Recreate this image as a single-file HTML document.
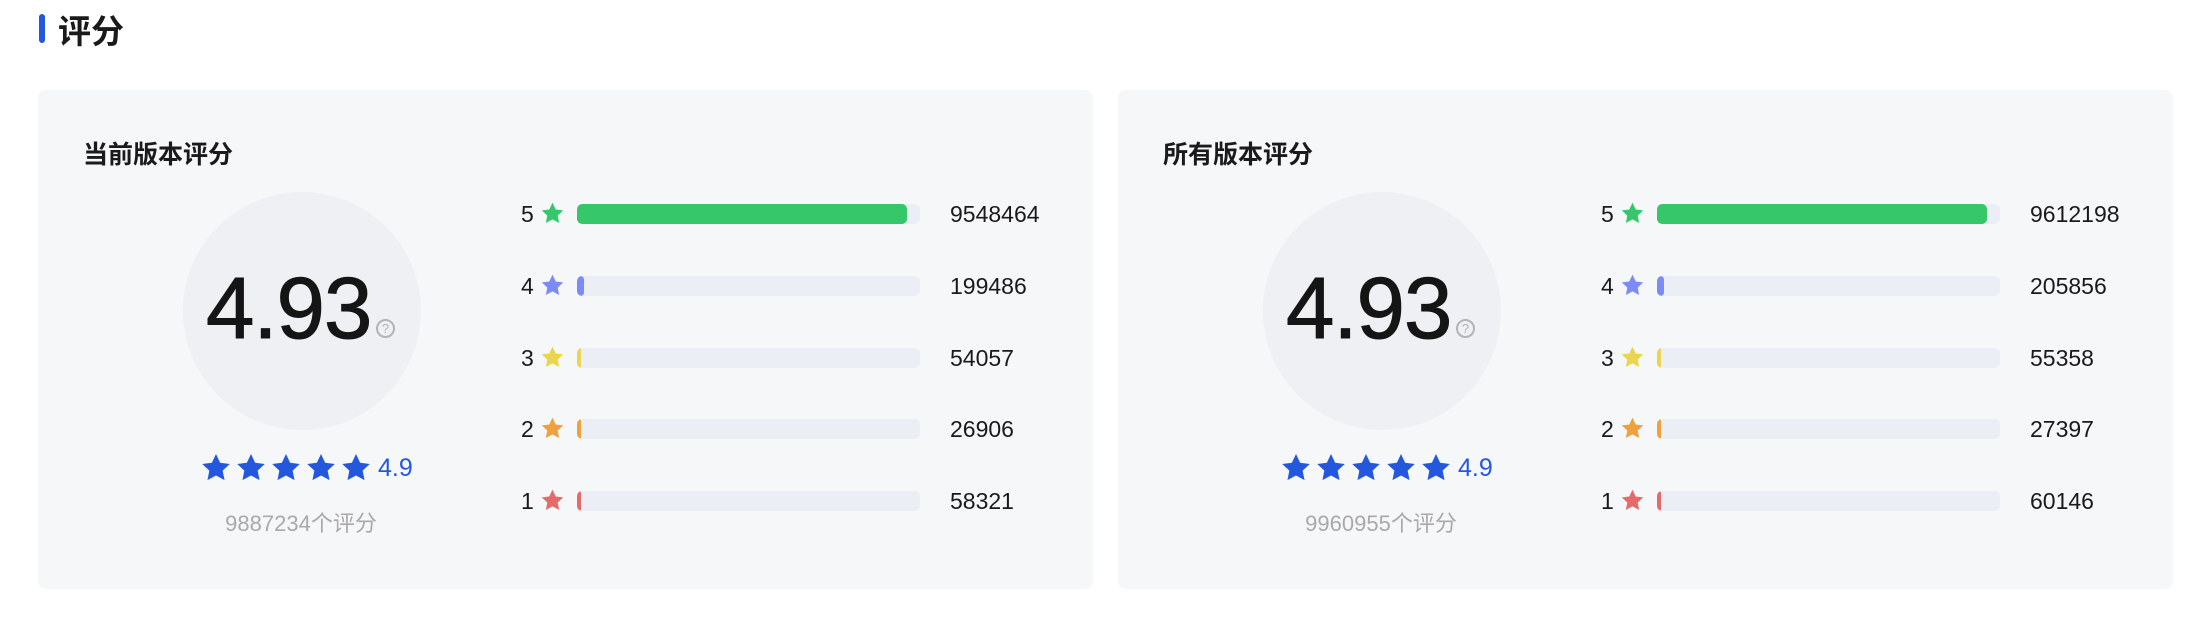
<!DOCTYPE html><html><head><meta charset="utf-8"><style>
*{margin:0;padding:0;box-sizing:border-box}
body{width:2208px;height:620px;background:#fff;font-family:"Liberation Sans","Noto Sans CJK SC",sans-serif;position:relative;overflow:hidden;color:#1a1a1a}
.abs{position:absolute}
.card{position:absolute;top:90px;width:1055px;height:499px;background:#f6f7f9;border-radius:8px}
.ct{position:absolute;left:45px;top:46px;font-size:25px;font-weight:bold;line-height:34px;font-family:"Noto Sans CJK SC",sans-serif}
.circ{position:absolute;left:145px;top:102px;width:238px;height:238px;border-radius:50%;background:#eef0f4}
.big{position:absolute;left:168px;top:174px;font-size:87px;line-height:90px;letter-spacing:-1px;color:#151515;-webkit-text-stroke:1px #151515}
.q{position:absolute;left:338px;top:229px;width:19px;height:19px;border:2px solid #b3b3b3;border-radius:50%;font-size:13px;line-height:15px;text-align:center;color:#b3b3b3}
.stars{position:absolute;left:162px;top:362px;height:32px;display:flex;align-items:center}
.stars svg{width:32px;height:32px;margin-right:3px}
.sc{font-size:25px;color:#2358de;margin-left:3px}
.cnt{position:absolute;left:0;width:526px;text-align:center;top:416px;font-size:22px;color:#a9a9ab;font-family:"Liberation Sans","Noto Sans CJK SC",sans-serif}
.row{position:absolute;left:483px;height:30px;width:560px}
.row .n{position:absolute;left:0;top:0;font-size:23px;line-height:30px}
.row svg{position:absolute;left:19px;top:2px;width:25px;height:25px}
.bar{position:absolute;left:56px;top:5px;width:343px;height:20px;border-radius:5px;background:#eceef5;overflow:hidden}
.bar i{position:absolute;left:0;top:0;bottom:0;border-radius:5px}
.v{position:absolute;left:429px;top:0;font-size:23px;line-height:30px}
</style></head><body>
<div class="abs" style="left:39px;top:14px;width:6px;height:29px;background:#2358de;border-radius:3px"></div>
<div class="abs" style="left:58px;top:9px;font-size:33px;line-height:40px;font-weight:bold;font-family:'Noto Sans CJK SC',sans-serif">评分</div>

<svg width="0" height="0" style="position:absolute"><defs><path id="st" d="M12 1.5l3.1 6.6 7.2.9-5.3 5 1.4 7.1L12 17.6l-6.4 3.5 1.4-7.1-5.3-5 7.2-.9z"/></defs></svg>

<div class="card" style="left:38px">
<div class="ct">当前版本评分</div>
<div class="circ"></div>
<div class="big">4.93</div><div class="q">?</div>
<div class="stars">
<svg viewBox="0 0 24 24"><use href="#st" fill="#2358de"/></svg><svg viewBox="0 0 24 24"><use href="#st" fill="#2358de"/></svg><svg viewBox="0 0 24 24"><use href="#st" fill="#2358de"/></svg><svg viewBox="0 0 24 24"><use href="#st" fill="#2358de"/></svg><svg viewBox="0 0 24 24"><use href="#st" fill="#2358de"/></svg><span class="sc">4.9</span></div>
<div class="cnt">9887234个评分</div>
<div class="row" style="top:109px"><span class="n">5</span><svg viewBox="0 0 24 24"><use href="#st" fill="#35c76a"/></svg><div class="bar"><i style="width:330px;background:#35c76a"></i></div><span class="v">9548464</span></div>
<div class="row" style="top:181px"><span class="n">4</span><svg viewBox="0 0 24 24"><use href="#st" fill="#7b8cf5"/></svg><div class="bar"><i style="width:7px;background:#7b8cf5"></i></div><span class="v">199486</span></div>
<div class="row" style="top:253px"><span class="n">3</span><svg viewBox="0 0 24 24"><use href="#st" fill="#ebd44e"/></svg><div class="bar"><i style="width:4px;background:#ebd44e"></i></div><span class="v">54057</span></div>
<div class="row" style="top:324px"><span class="n">2</span><svg viewBox="0 0 24 24"><use href="#st" fill="#eda23d"/></svg><div class="bar"><i style="width:4px;background:#eda23d"></i></div><span class="v">26906</span></div>
<div class="row" style="top:396px"><span class="n">1</span><svg viewBox="0 0 24 24"><use href="#st" fill="#e56b6b"/></svg><div class="bar"><i style="width:4px;background:#e56b6b"></i></div><span class="v">58321</span></div>
</div>

<div class="card" style="left:1118px">
<div class="ct">所有版本评分</div>
<div class="circ"></div>
<div class="big">4.93</div><div class="q">?</div>
<div class="stars">
<svg viewBox="0 0 24 24"><use href="#st" fill="#2358de"/></svg><svg viewBox="0 0 24 24"><use href="#st" fill="#2358de"/></svg><svg viewBox="0 0 24 24"><use href="#st" fill="#2358de"/></svg><svg viewBox="0 0 24 24"><use href="#st" fill="#2358de"/></svg><svg viewBox="0 0 24 24"><use href="#st" fill="#2358de"/></svg><span class="sc">4.9</span></div>
<div class="cnt">9960955个评分</div>
<div class="row" style="top:109px"><span class="n">5</span><svg viewBox="0 0 24 24"><use href="#st" fill="#35c76a"/></svg><div class="bar"><i style="width:330px;background:#35c76a"></i></div><span class="v">9612198</span></div>
<div class="row" style="top:181px"><span class="n">4</span><svg viewBox="0 0 24 24"><use href="#st" fill="#7b8cf5"/></svg><div class="bar"><i style="width:7px;background:#7b8cf5"></i></div><span class="v">205856</span></div>
<div class="row" style="top:253px"><span class="n">3</span><svg viewBox="0 0 24 24"><use href="#st" fill="#ebd44e"/></svg><div class="bar"><i style="width:4px;background:#ebd44e"></i></div><span class="v">55358</span></div>
<div class="row" style="top:324px"><span class="n">2</span><svg viewBox="0 0 24 24"><use href="#st" fill="#eda23d"/></svg><div class="bar"><i style="width:4px;background:#eda23d"></i></div><span class="v">27397</span></div>
<div class="row" style="top:396px"><span class="n">1</span><svg viewBox="0 0 24 24"><use href="#st" fill="#e56b6b"/></svg><div class="bar"><i style="width:4px;background:#e56b6b"></i></div><span class="v">60146</span></div>
</div>
</body></html>
